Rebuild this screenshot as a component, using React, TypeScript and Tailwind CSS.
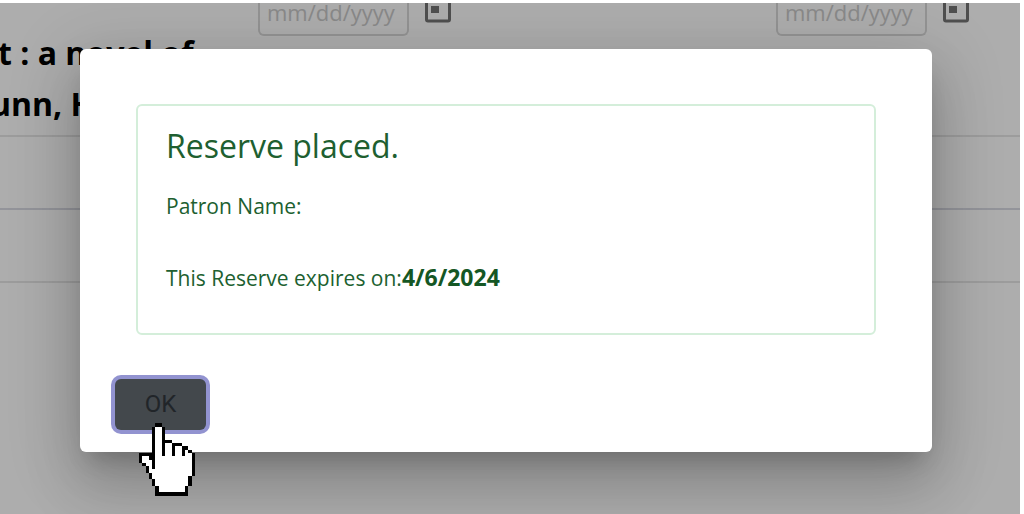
import type { ReactNode } from 'react';

// X = outline, o = fill
const HAND = [
  '.....XX..........',
  '....XooX.........',
  '....XooX.........',
  '....XooX.........',
  '....XooX.........',
  '....XooXXX.......',
  '....XooXooXXX....',
  '....XooXooXooXX..',
  '....XooXooXooXoX.',
  'XXXXXooXooXooXooX',
  'XooXXoooooooooooX',
  'XoooXoooooooooooX',
  '.XooXoooooooooooX',
  '..XoXoooooooooooX',
  '..XoooooooooooooX',
  '...XooooooooooooX',
  '...XoooooooooooX.',
  '....XooooooooooX.',
  '....XooooooooooX.',
  '.....XooooooooX..',
  '.....XooooooooX..',
  '.....XXXXXXXXXX..',
];

const HandPointer = () => (
  <svg
    viewBox="0 0 17 22"
    aria-hidden="true"
    shapeRendering="crispEdges"
    className="pointer-events-none absolute left-6 top-11 z-10 h-[73px] w-14"
  >
    {HAND.flatMap((row, y) =>
      row.split('').map((c, x) =>
        c === '.' ? null : (
          <rect key={`${x}-${y}`} x={x} y={y} width="1" height="1" fill={c === 'X' ? '#000' : '#fff'} />
        )
      )
    )}
  </svg>
);

const CalendarIcon = () => (
  <svg viewBox="0 0 26 20" aria-hidden="true" className="h-5 w-[26px]">
    <path d="M1.5 -4V16.5Q1.5 18 3 18H23Q24.500 18 24.500 16.500V-4" fill="none" stroke="#757575" strokeWidth="3" />
    <rect x="6" y="3" width="8" height="7" fill="#757575" />
  </svg>
);

const DateField = ({ label }: { label: string }) => (
  <div className="flex items-start gap-4">
    <input
      type="text"
      aria-label={label}
      placeholder="mm/dd/yyyy"
      className="h-[33px] w-[151px] rounded-b-md border-2 border-t-0 border-[#d9d9d9] bg-transparent px-[7px] pb-3 text-[22px] text-gray-700 placeholder:text-[#cbcbcb]"
    />
    <button type="button" aria-label={`Pick ${label}`}>
      <CalendarIcon />
    </button>
  </div>
);

const RecordPage = () => (
  <div>
    <div className="grid grid-cols-[518px_1fr] pl-[258px]">
      <DateField label="start date" />
      <DateField label="end date" />
    </div>
    <h1 className="-mt-[9px] h-[108px] text-[32px] font-bold leading-[51px] text-black">
      <span className="-ml-0.5 block">t : a novel of</span>
      <span className="-ml-2.5 block">unn, H</span>
    </h1>
    <div className="h-[73px] border-t-2 border-[#e6e6e6]" />
    <div className="h-[73px] border-t-2 border-[#d9dbe4]" />
    <div className="border-t-2 border-[#e6e6e6]" />
  </div>
);

const Dialog = ({ children }: { children: ReactNode }) => (
  <div className="absolute inset-0 bg-black/32 pb-[62px] pl-20 pr-[88px] pt-[46px]">
    <div
      role="dialog"
      aria-modal="true"
      aria-labelledby="reserve-title"
      className="rounded-md bg-white px-[35px] pb-[22px] pt-[55px] shadow-[0_16px_22px_-10px_rgba(0,0,0,0.2),0_35px_56px_4px_rgba(0,0,0,0.14),0_13px_68px_12px_rgba(0,0,0,0.12)]"
    >
      {children}
    </div>
  </div>
);

export default function App() {
  return (
    <div className="flex min-h-screen flex-col bg-white pr-1 pt-[3px] font-['Open_Sans','Noto_Sans',sans-serif]">
      <main className="relative grow overflow-hidden">
        <RecordPage />
        <Dialog>
          <section className="mx-[21px] h-[231px] rounded-md border-2 border-[#d4eeda] px-7 pt-[17px] text-[#205f30]">
            <h2 id="reserve-title" className="text-[32px] leading-[46px]">
              Reserve placed.
            </h2>
            <p className="mt-5 text-[21px] leading-[35px]">Patron Name:</p>
            <p className="mt-9 text-[21px] leading-[35px]">
              This Reserve expires on:<strong className="text-[23px] text-[#155724]">4/6/2024</strong>
            </p>
          </section>
          <div className="relative mt-[44px] flex">
            <button
              type="button"
              className="h-[51px] w-[91px] rounded-md bg-[#43484c] pb-0.5 font-[Roboto,sans-serif] text-2xl text-[#212529] ring-4 ring-[#9293d0]"
            >
              OK
            </button>
            <HandPointer />
          </div>
        </Dialog>
      </main>
    </div>
  );
}
